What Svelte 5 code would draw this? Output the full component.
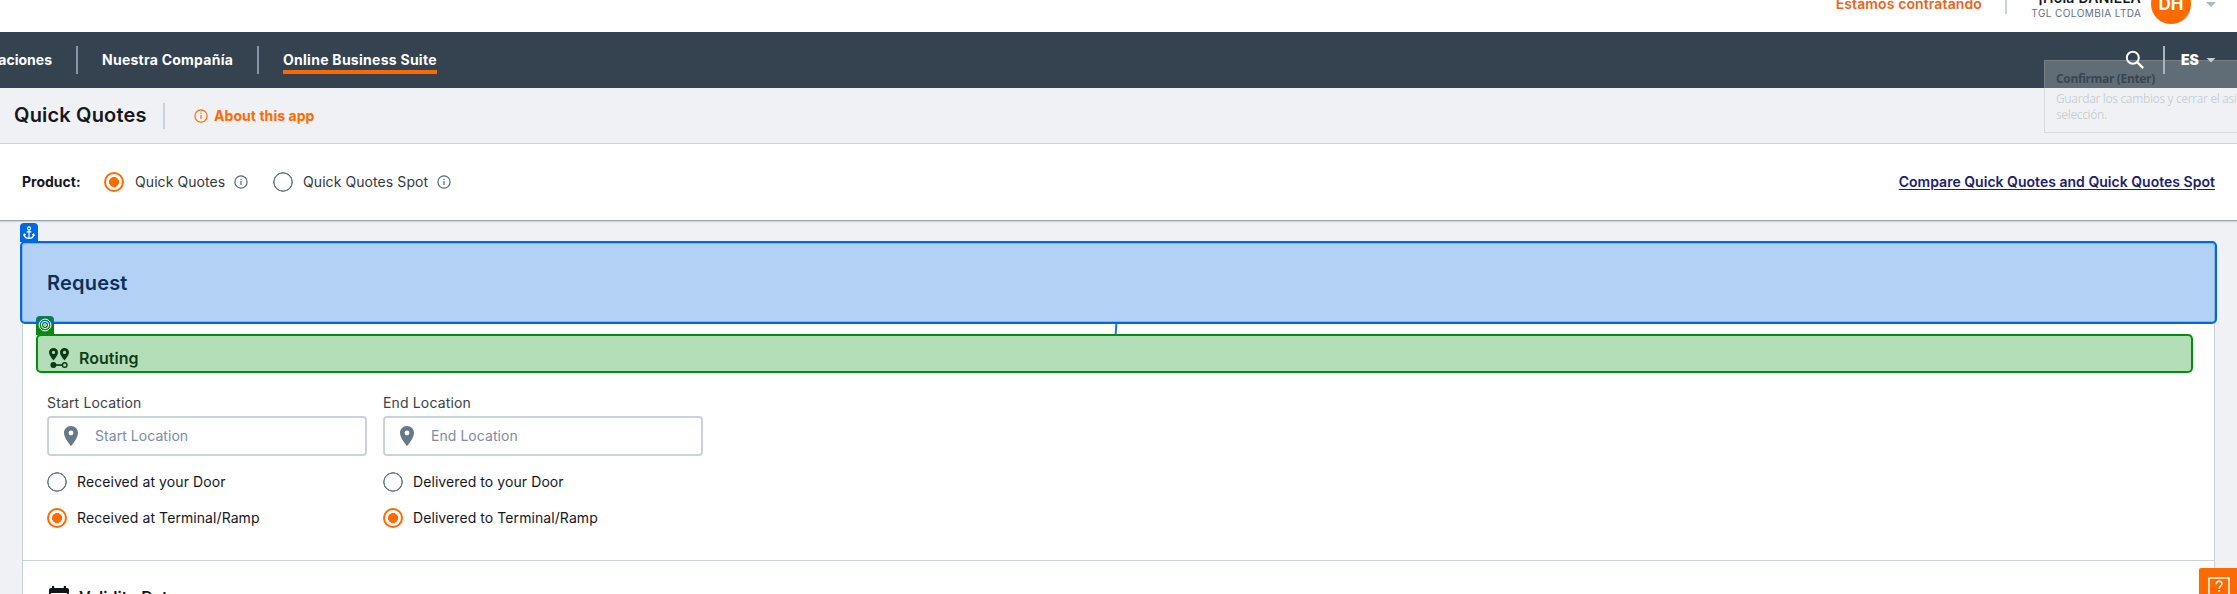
<script>
  const ends = [
    { label: 'Start Location', options: ['Received at your Door', 'Received at Terminal/Ramp'] },
    { label: 'End Location', options: ['Delivered to your Door', 'Delivered to Terminal/Ramp'] }
  ];
</script>

{#snippet info(size)}
  <svg class="info" width={size} height={size} viewBox="0 0 14 14" fill="none" stroke="currentColor">
    <circle cx="7" cy="7" r="6.1" stroke-width="1.2" />
    <path d="M7 6v4M7 3.7v1.3" stroke-width="1.2" />
  </svg>
{/snippet}

<div class="page">
  <header class="top">
    <a class="hiring" href="#jobs">Estamos contratando</a>
    <i class="top-sep"></i>
    <div class="user"><b>¡Hola DANIELA</b><span>TGL COLOMBIA LTDA</span></div>
    <div class="avatar">DH</div>
    <i class="caret"></i>
  </header>

  <nav>
    <span class="first">Operaciones</span>
    <i class="sep s1"></i>
    <span class="company">Nuestra Compañía</span>
    <i class="sep s2"></i>
    <span class="active">Online Business Suite</span>
    <div class="tools">
      <svg width="20" height="20" viewBox="0 0 20 20" fill="none" stroke="#fff" stroke-width="2">
        <circle cx="7.8" cy="7.8" r="6" /><path d="M12 12l6.2 6.2" stroke-width="2.4" />
      </svg>
      <i class="sep"></i>
      <b>ES</b>
      <i class="caret"></i>
    </div>
  </nav>

  <div class="titlebar">
    <h1>Quick Quotes</h1>
    <i class="tsep"></i>
    <span class="about">{@render info(14)}<span>About this app</span></span>
  </div>

  <div class="product">
    <b>Product:</b>
    <span class="radio on"></span><span class="plabel l1">Quick Quotes</span>{@render info(14)}
    <span class="radio second"></span><span class="plabel l2">Quick Quotes Spot</span>{@render info(14)}
    <a href="#compare">Compare Quick Quotes and Quick Quotes Spot</a>
  </div>

  <main>
    <section class="card">
      <div class="card-head">
        <h2>Request</h2>
        <div class="pick blue"></div>
        <div class="tab anchor">
          <svg width="12" height="14" viewBox="0 0 12 14" fill="none" stroke="#fff" stroke-width="1.2">
            <circle cx="6" cy="2.4" r="1.5" /><path d="M6 3.9v8.5M3.6 5.8h4.8M1.2 8.4c.2 2.4 2 4 4.8 4s4.6-1.6 4.8-4M.5 9.7l.8-1.5 1.5.9M11.5 9.7l-.8-1.5-1.5.9" />
          </svg>
        </div>
        <div class="link"></div>
      </div>
      <div class="routing">
        <svg width="22" height="22" viewBox="0 0 22 22" fill="#111519">
          <path fill-rule="evenodd" d="M5.5 1C3 1 1 2.9 1 5.3 1 8.500 5.500 13.500 5.500 13.500S10 8.500 10 5.300C10 2.900 8 1 5.500 1zm0 2.800a1.600 1.600 0 1 1 0 3.200 1.600 1.600 0 0 1 0-3.200z" />
          <path fill-rule="evenodd" d="M16.500 1C14 1 12 2.900 12 5.300c0 3.200 4.500 8.200 4.500 8.200S21 8.500 21 5.300C21 2.900 19 1 16.500 1zm0 2.800a1.600 1.600 0 1 1 0 3.200 1.600 1.600 0 0 1 0-3.200z" />
          <circle cx="5.400" cy="18" r="3" />
          <path d="M7 17.200h7.500v1.700H7z" />
          <circle cx="16.700" cy="18" r="2.300" fill="none" stroke="#111519" stroke-width="1.400" />
        </svg>
        <h3>Routing</h3>
        <div class="pick green"></div>
        <div class="tab target">
          <svg width="14" height="14" viewBox="0 0 14 14" fill="none" stroke="#fff" stroke-width="1">
            <circle cx="7" cy="7" r="5.900" /><circle cx="7" cy="7" r="3.700" /><circle cx="7" cy="7" r="1.300" />
          </svg>
        </div>
      </div>

      <div class="locations">
        {#each ends as end}
          <div class="location">
            <span class="field-label">{end.label}</span>
            <div class="field">
              <svg width="14" height="20" viewBox="0 0 14 20" fill="#66788a">
                <path fill-rule="evenodd" d="M7 0C3 0 0 3 0 7c0 5.200 7 13 7 13s7-7.800 7-13c0-4-3-7-7-7zm0 4.600a2.400 2.400 0 1 1 0 4.800 2.400 2.400 0 0 1 0-4.800z" />
              </svg>
              <span>{end.label}</span>
            </div>
            {#each end.options as option, i}
              <div class="option"><span class="radio" class:on={i === 1}></span><span>{option}</span></div>
            {/each}
          </div>
        {/each}
      </div>

      <div class="validity">
        <svg width="20" height="22" viewBox="0 0 20 22" fill="#111519">
          <path fill-rule="evenodd" d="M3 0h2.200v2h9.600V0H17v2h1a2 2 0 0 1 2 2v16a2 2 0 0 1-2 2H2a2 2 0 0 1-2-2V4a2 2 0 0 1 2-2h1zM2 7v13h16V7z" />
        </svg>
        <h3>Validity Dates</h3>
      </div>
    </section>
  </main>

  <div class="tip"><b>Confirmar (Enter)</b><span>Guardar los cambios y cerrar el asistente de</span><span>selección.</span></div>
  <div class="help">
    <svg width="22" height="20" viewBox="0 0 22 20" fill="none" stroke="#fff" stroke-width="1.500">
      <rect x="1" y="1" width="20" height="18" />
      <path d="M8.200 7.200c0-1.900 1.200-2.900 2.900-2.900s2.800 1 2.800 2.500c0 2.200-2.800 2.200-2.800 5M11.100 13v1.800" />
    </svg>
  </div>
</div>

<style>
  :global(body) { overflow: hidden; }
  .page {
    position: relative; width: 2237px; height: 594px; overflow: hidden;
    background: #f0f1f5; color: #14171c;
    font: 400 14px/20px Inter, sans-serif;
    display: flex; flex-direction: column;
  }
  .page * { box-sizing: border-box; }
  h1, h2, h3 { margin: 0; font-weight: 600; }
  i { display: block; flex: none; }
  span, b, a, h1, h2, h3 { white-space: nowrap; }
  svg { display: block; flex: none; }

  .top { height: 32px; flex: none; background: #fff; display: flex; align-items: flex-start; justify-content: flex-end; padding-right: 21px; }
  .hiring { color: #e8651a; font-weight: 600; text-decoration: none; margin-top: -6px; letter-spacing: .12px; }
  .top-sep { width: 2px; height: 14px; background: #c8d3de; margin-left: 23px; }
  .user { width: 134px; margin-top: -12px; display: flex; flex-direction: column; align-items: flex-end; }
  .user b { font-weight: 600; height: 16px; letter-spacing: .25px; }
  .user span { font-size: 10px; line-height: 18px; color: #5f7082; letter-spacing: .42px; margin-right: -.42px; }
  .avatar { width: 40px; height: 40px; border-radius: 50%; background: #ff6a00; color: #fff; font-weight: 700; font-size: 17px; line-height: 40px; text-align: center; margin: -16px 15px 0 10px; }
  .caret { width: 10px; height: 5px; background: #a9b8c8; clip-path: polygon(0 0, 100% 0, 50% 100%); }
  .top .caret { margin-top: 2px; }

  nav { height: 56px; flex: none; background: #34434f; color: #fff; font-weight: 700; display: flex; align-items: center; }
  .first { width: 52px; display: flex; justify-content: flex-end; }
  .sep { width: 2px; height: 28px; background: #8495a8; }
  .s1 { margin: 0 24px; }
  .company { width: 131px; letter-spacing: .25px; }
  .s2 { margin: 0 24px; }
  .active { width: 154px; height: 28px; line-height: 28px; letter-spacing: .27px; border-bottom: 4px solid #ff6a00; }
  .tools { position: relative; z-index: 3; margin-left: auto; display: flex; align-items: center; padding-right: 21px; }
  .tools .sep { margin: 0 16px 0 18px; background: #a9b5c2; }
  .tools b { width: 25px; }
  .tools .caret { background: #c3ced9; }

  .titlebar { height: 56px; flex: none; border-bottom: 1px solid #c8d3de; display: flex; align-items: center; padding-left: 14px; }
  h1 { width: 132px; font-size: 20px; line-height: 28px; letter-spacing: .17px; margin-top: -2px; }
  .tsep { width: 2px; height: 26px; background: #c8d3de; margin: 1px 29px 0 17px; }
  .about { display: flex; align-items: center; gap: 6px; color: #ff6a00; font-weight: 700; letter-spacing: .06px; }

  .product { height: 77px; flex: none; background: #fff; border-bottom: 1px solid #a2a5a9; box-shadow: 0 1px 1px #d3d5d8; display: flex; align-items: center; padding: 0 22px; z-index: 1; }
  .product b { width: 82px; font-weight: 700; }
  .product > :global(.info) { color: #56687a; }
  .plabel { margin-left: 11px; color: #34383e; }
  .l1 { width: 99px; letter-spacing: .08px; }
  .l2 { margin-left: 10px; width: 134px; letter-spacing: .08px; }
  .second { margin-left: 25px; }
  .product a { margin-left: auto; color: #20206c; font-weight: 600; text-underline-offset: 2px; letter-spacing: .02px; }
  .radio { flex: none; width: 20px; height: 20px; border-radius: 50%; background: radial-gradient(circle, #fff 8.200px, #66788a 8.700px, #66788a 9.700px, transparent 10px); }
  .radio.on { border: 2px solid #ff6a00; background: radial-gradient(circle, #ff6a00 4.700px, #fff 5.300px); }

  main { padding: 22px 22px 0; }
  .card { height: 400px; background: #fff; border: 1px solid #c8d3de; border-radius: 4px; }
  .card-head { position: relative; height: 78px; padding-left: 24px; display: flex; align-items: center; border-bottom: 1px solid #c8d3de; }
  h2 { font-size: 20px; line-height: 28px; letter-spacing: .2px; }
  .pick { position: absolute; border-radius: 5px; }
  .blue { inset: -3px; border: 2px solid #0068e0; background: rgba(0, 102, 222, .3); }
  .tab { position: absolute; width: 18px; height: 19px; border-radius: 4px 4px 0 0; display: flex; justify-content: center; }
  .anchor { left: -3px; top: -21px; background: #0068e0; padding-top: 3px; }
  .link { position: absolute; left: 1092px; top: 80px; width: 2px; height: 10px; background: #1a75e4; transform: skewX(-4deg); }
  .routing { position: relative; display: flex; align-items: center; height: 35px; margin: 14px 23px 0 15px; padding-left: 10px; }
  .routing > svg { margin-top: 9px; }
  h3 { font-size: 16px; line-height: 24px; letter-spacing: .03px; }
  .routing h3 { margin: 9px 0 0 9px; }
  .green { inset: -2px; border: 2px solid #068a12; background: rgba(6, 145, 16, .3); }
  .target { left: -2px; top: -20px; background: linear-gradient(#0b7b55 0 6px, #0068e0 6px 8px, #068a12 8px); padding-top: 2px; }

  .locations { display: flex; gap: 16px; padding: 22px 24px 0; height: 189px; }
  .location { width: 320px; }
  .field-label { display: block; line-height: 20px; height: 23px; color: #3c4045; letter-spacing: .15px; }
  .field { height: 40px; border: 2px solid #c8d3de; border-radius: 4px; display: flex; align-items: center; padding-left: 15px; gap: 17px; color: #7b8da3; margin-bottom: 16px; letter-spacing: .05px; }
  .option { display: flex; gap: 10px; height: 20px; align-items: center; margin-bottom: 16px; letter-spacing: .08px; }
  .validity { border-top: 1px solid #c8d3de; padding: 25px 26px; display: flex; gap: 10px; }
  .validity h3 { margin-top: -1px; }

  .tip { position: absolute; z-index: 2; left: 2044px; top: 60px; width: 240px; height: 73px; border: 1px solid rgba(160, 165, 170, .3); background: rgba(240, 241, 245, .24); padding: 9px 11px; display: flex; flex-direction: column; font: 12px/16px "Open Sans", "Noto Sans", sans-serif; letter-spacing: -.36px; color: rgba(110, 115, 120, .3); }
  .tip b { color: rgba(30, 40, 50, .6); height: 23px; font-weight: 700; line-height: 18px; letter-spacing: -.35px; }
  .help { position: absolute; z-index: 2; right: 0; bottom: 0; width: 38px; height: 26px; background: #ff6a00; border-radius: 2px 0 0; padding: 9px 0 0 9px; overflow: hidden; }
</style>
